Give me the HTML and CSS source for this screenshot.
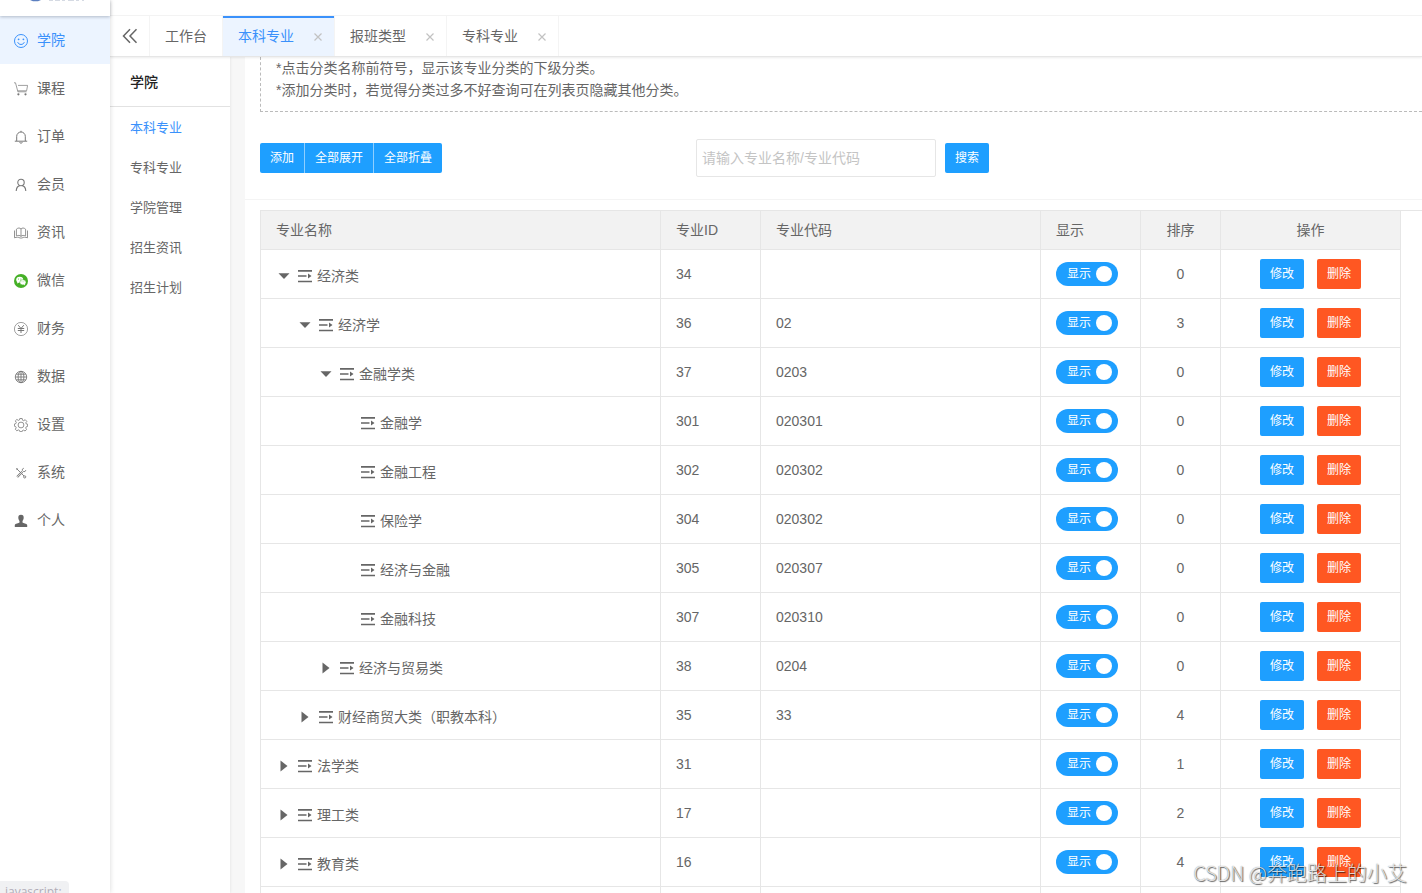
FILE: index.html
```html
<!DOCTYPE html>
<html lang="zh-CN">
<head>
<meta charset="utf-8">
<title>本科专业</title>
<link rel="stylesheet" href="styles.css">
</head>
<body>
<svg class="defs" aria-hidden="true">
  <symbol id="list" viewBox="0 0 14 14"><path d="M0 1.8h14M0 7h8.500M0 12.500h14" fill="none" stroke="currentColor" stroke-width="1.700"/><path d="M10 4.600v4.800l3.500-2.400z" fill="currentColor"/></symbol>
  <symbol id="down" viewBox="0 0 12 12"><path d="M.5 3.200h11L6 9z" fill="currentColor"/></symbol>
  <symbol id="right" viewBox="0 0 12 12"><path d="M2.500.5v11L9.500 6z" fill="currentColor"/></symbol>
  <symbol id="cross" viewBox="0 0 8 8"><path d="M.5.5l7 7M7.500.5l-7 7" fill="none" stroke="currentColor" stroke-width="1.200"/></symbol>
</svg>
<div class="app">
  <aside class="sidebar">
    <div class="logo"><svg width="60" height="4" viewBox="0 0 60 4" aria-hidden="true"><path d="M0 0h11L8 1.200H3z" fill="#5b7fc0"/><path d="M19 .5h4m2 0h5m2 0h3m3 0h6m2 0h3m3 0h2" stroke="#d5dae3"/></svg></div>
    <nav class="menu">
      <a class="menu-item active" href="#"><svg class="icon" viewBox="0 0 14 14"><g fill="none" stroke="currentColor"><circle cx="7" cy="7" r="6.500"/><path d="M3.700 8.200c1 3 5.600 3 6.600 0"/></g><circle cx="4.600" cy="5.300" r=".9" fill="currentColor"/><circle cx="9.400" cy="5.300" r=".9" fill="currentColor"/></svg>学院</a>
      <a class="menu-item" href="#"><svg class="icon" viewBox="0 0 14 14"><path d="M0 .8h1.500l2.400 9h8.600M4 3.400h9.600l-1 5.400H3.800" fill="none" stroke="currentColor" stroke-width=".7"/><circle cx="4.400" cy="12.300" r="1.100" fill="currentColor"/><circle cx="11.500" cy="12.300" r="1.100" fill="currentColor"/></svg>课程</a>
      <a class="menu-item" href="#"><svg class="icon" viewBox="0 0 14 14"><path d="M.8 11.200h12.400M2.700 11V6.300a4.300 4.300 0 0 1 8.600 0V11M5.700 12.200c.3 1.400 2.300 1.400 2.600 0M7 2V.8" fill="none" stroke="currentColor"/></svg>订单</a>
      <a class="menu-item" href="#"><svg class="icon" viewBox="0 0 14 14"><circle cx="7" cy="4.500" r="3.200" fill="none" stroke="currentColor" stroke-width="1.100"/><path d="M2.200 13c.2-3 1.600-5 3.600-5.400M11.800 13c-.2-3-1.600-5-3.600-5.400" fill="none" stroke="currentColor" stroke-width="1.100"/></svg>会员</a>
      <a class="menu-item" href="#"><svg class="icon" viewBox="0 0 14 14"><path d="M2.400 9.800V3.200C4 1.600 6 1.700 7 3c1-1.300 3-1.400 4.600.2v6.600C10 9.200 8 9.200 7 10.400 6 9.200 4 9.200 2.400 9.800zM7 3v7.400M.5 4.500v7.300c2-.8 4-.8 5.500.2h2c1.500-1 3.500-1 5.500-.2V4.500" fill="none" stroke="currentColor" stroke-width=".8"/></svg>资讯</a>
      <a class="menu-item" href="#"><svg class="icon" viewBox="0 0 14 14"><circle cx="7" cy="7" r="7" fill="#45b026"/><ellipse cx="5.700" cy="5.700" rx="3.500" ry="2.900" fill="#fff"/><path d="M3.500 7.500L3 9.600l2.200-1.200z" fill="#fff"/><ellipse cx="8.900" cy="8.300" rx="3.100" ry="2.600" fill="#fff" stroke="#45b026" stroke-width=".5"/><path d="M9.500 10.500l1.700.9-.4-1.500z" fill="#fff"/><g fill="#45b026"><circle cx="4.500" cy="5" r=".5"/><circle cx="6.900" cy="5" r=".5"/><circle cx="8" cy="7.800" r=".4"/><circle cx="9.900" cy="7.800" r=".4"/></g></svg>微信</a>
      <a class="menu-item" href="#"><svg class="icon" viewBox="0 0 14 14"><circle cx="7" cy="7" r="6.600" fill="none" stroke="currentColor" stroke-width=".7"/><path d="M4.200 3.200L7 6.500l2.800-3.300M3.800 6.500h6.400M3.800 8.500h6.400M7 6.500V11" fill="none" stroke="currentColor"/></svg>财务</a>
      <a class="menu-item" href="#"><svg class="icon" viewBox="0 0 14 14"><g fill="none" stroke="currentColor" stroke-width=".9"><circle cx="7" cy="7" r="5.700"/><ellipse cx="7" cy="7" rx="2.900" ry="5.700"/><path d="M7 1.300v11.400M1.300 7h11.400M2.200 4.200h9.600M2.200 9.800h9.600"/></g></svg>数据</a>
      <a class="menu-item" href="#"><svg class="icon" viewBox="0 0 14 14"><g fill="none" stroke="currentColor" stroke-width=".8"><circle cx="7" cy="7" r="2.900"/><path d="M5.800.5h2.400l.3 1.700 1.200.5 1.500-1 1.600 1.700-1 1.400.5 1.200 1.300.2v2.200l-1.400.4-.5 1.200.9 1.500-1.600 1.500-1.400-.9-1.200.5-.3 1.100H5.900l-.4-1.300-1.200-.5-1.500.9-1.500-1.600.9-1.400-.5-1.200L.4 8.200V6l1.400-.4.5-1.200-1-1.500 1.600-1.500 1.400 1 1.200-.5z"/></g></svg>设置</a>
      <a class="menu-item" href="#"><svg class="icon" viewBox="0 0 14 14"><g fill="none" stroke="currentColor" stroke-width=".9"><path d="M3 3l7 7"/><path d="M8.300 5.800L3.200 11" stroke-width="2.200"/><path d="M8.300 5.800L3.200 11" stroke="#fff" stroke-width=".8"/><path d="M9.800 2.200a2 2 0 0 0-1.400 2.600M11.900 4.100a2 2 0 0 1-2.700 1.400"/><circle cx="10.700" cy="10.900" r="1.100"/></g><path d="M2 2l2.200.8-1.400 1.400z" fill="currentColor"/></svg>系统</a>
      <a class="menu-item" href="#"><svg class="icon" viewBox="0 0 14 14"><path d="M7 .8c2 0 2.800 1.200 2.700 3-.1 1.700-.8 2.600-1.200 3.300v1.300c.7.700 4.300 1 4.700 2.600v2H.8v-2c.4-1.600 4-1.900 4.700-2.600V7.100C5.100 6.400 4.400 5.500 4.300 3.800 4.200 2 5 .8 7 .8z" fill="#666"/></svg>个人</a>
    </nav>
  </aside>
  <div class="workspace">
    <header class="topbar"></header>
    <div class="tabs">
      <button class="collapse" type="button" aria-label="收起"><svg width="16" height="16" viewBox="0 0 16 16"><path d="M8 1.200L1.500 8 8 14.800M14.500 1.200L8 8l6.500 6.800" fill="none" stroke="currentColor" stroke-width="1.500"/></svg></button>
      <div class="tab"><a href="#">工作台</a></div>
      <div class="tab closable active"><a href="#">本科专业</a><button type="button" aria-label="关闭"><svg><use href="#cross"/></svg></button></div>
      <div class="tab closable"><a href="#">报班类型</a><button type="button" aria-label="关闭"><svg><use href="#cross"/></svg></button></div>
      <div class="tab closable"><a href="#">专科专业</a><button type="button" aria-label="关闭"><svg><use href="#cross"/></svg></button></div>
    </div>
    <div class="body">
      <nav class="subnav">
        <h2>学院</h2>
        <div class="sublinks">
          <a class="active" href="#">本科专业</a>
          <a href="#">专科专业</a>
          <a href="#">学院管理</a>
          <a href="#">招生资讯</a>
          <a href="#">招生计划</a>
        </div>
      </nav>
      <main class="content">
        <div class="tips"><p>*点击分类名称前符号，显示该专业分类的下级分类。</p><p>*添加分类时，若觉得分类过多不好查询可在列表页隐藏其他分类。</p></div>
        <div class="toolbar">
          <div class="group"><button class="btn" type="button">添加</button><button class="btn" type="button">全部展开</button><button class="btn" type="button">全部折叠</button></div>
          <form class="search"><input type="text" aria-label="专业名称/专业代码" placeholder="请输入专业名称/专业代码"><button class="btn" type="button">搜索</button></form>
        </div>
        <div class="table-wrap">
          <table class="grid">
            <colgroup><col class="c-name"><col class="c-id"><col class="c-code"><col class="c-show"><col class="c-sort"><col class="c-ops"></colgroup>
            <thead><tr><th>专业名称</th><th>专业ID</th><th>专业代码</th><th>显示</th><th class="mid">排序</th><th class="mid">操作</th></tr></thead>
            <tbody>
              <tr><td><div class="node"><button type="button" aria-label="折叠"><svg><use href="#down"/></svg></button><svg class="list"><use href="#list"/></svg>经济类</div></td><td>34</td><td></td><td><label class="switch">显示<input type="checkbox" checked></label></td><td class="mid">0</td><td><div class="ops"><button class="btn" type="button">修改</button><button class="btn danger" type="button">删除</button></div></td></tr>
              <tr><td><div class="node l1"><button type="button" aria-label="折叠"><svg><use href="#down"/></svg></button><svg class="list"><use href="#list"/></svg>经济学</div></td><td>36</td><td>02</td><td><label class="switch">显示<input type="checkbox" checked></label></td><td class="mid">3</td><td><div class="ops"><button class="btn" type="button">修改</button><button class="btn danger" type="button">删除</button></div></td></tr>
              <tr><td><div class="node l2"><button type="button" aria-label="折叠"><svg><use href="#down"/></svg></button><svg class="list"><use href="#list"/></svg>金融学类</div></td><td>37</td><td>0203</td><td><label class="switch">显示<input type="checkbox" checked></label></td><td class="mid">0</td><td><div class="ops"><button class="btn" type="button">修改</button><button class="btn danger" type="button">删除</button></div></td></tr>
              <tr><td><div class="node leaf"><svg class="list"><use href="#list"/></svg>金融学</div></td><td>301</td><td>020301</td><td><label class="switch">显示<input type="checkbox" checked></label></td><td class="mid">0</td><td><div class="ops"><button class="btn" type="button">修改</button><button class="btn danger" type="button">删除</button></div></td></tr>
              <tr><td><div class="node leaf"><svg class="list"><use href="#list"/></svg>金融工程</div></td><td>302</td><td>020302</td><td><label class="switch">显示<input type="checkbox" checked></label></td><td class="mid">0</td><td><div class="ops"><button class="btn" type="button">修改</button><button class="btn danger" type="button">删除</button></div></td></tr>
              <tr><td><div class="node leaf"><svg class="list"><use href="#list"/></svg>保险学</div></td><td>304</td><td>020302</td><td><label class="switch">显示<input type="checkbox" checked></label></td><td class="mid">0</td><td><div class="ops"><button class="btn" type="button">修改</button><button class="btn danger" type="button">删除</button></div></td></tr>
              <tr><td><div class="node leaf"><svg class="list"><use href="#list"/></svg>经济与金融</div></td><td>305</td><td>020307</td><td><label class="switch">显示<input type="checkbox" checked></label></td><td class="mid">0</td><td><div class="ops"><button class="btn" type="button">修改</button><button class="btn danger" type="button">删除</button></div></td></tr>
              <tr><td><div class="node leaf"><svg class="list"><use href="#list"/></svg>金融科技</div></td><td>307</td><td>020310</td><td><label class="switch">显示<input type="checkbox" checked></label></td><td class="mid">0</td><td><div class="ops"><button class="btn" type="button">修改</button><button class="btn danger" type="button">删除</button></div></td></tr>
              <tr><td><div class="node l2"><button type="button" aria-label="展开"><svg><use href="#right"/></svg></button><svg class="list"><use href="#list"/></svg>经济与贸易类</div></td><td>38</td><td>0204</td><td><label class="switch">显示<input type="checkbox" checked></label></td><td class="mid">0</td><td><div class="ops"><button class="btn" type="button">修改</button><button class="btn danger" type="button">删除</button></div></td></tr>
              <tr><td><div class="node l1"><button type="button" aria-label="展开"><svg><use href="#right"/></svg></button><svg class="list"><use href="#list"/></svg>财经商贸大类（职教本科）</div></td><td>35</td><td>33</td><td><label class="switch">显示<input type="checkbox" checked></label></td><td class="mid">4</td><td><div class="ops"><button class="btn" type="button">修改</button><button class="btn danger" type="button">删除</button></div></td></tr>
              <tr><td><div class="node"><button type="button" aria-label="展开"><svg><use href="#right"/></svg></button><svg class="list"><use href="#list"/></svg>法学类</div></td><td>31</td><td></td><td><label class="switch">显示<input type="checkbox" checked></label></td><td class="mid">1</td><td><div class="ops"><button class="btn" type="button">修改</button><button class="btn danger" type="button">删除</button></div></td></tr>
              <tr><td><div class="node"><button type="button" aria-label="展开"><svg><use href="#right"/></svg></button><svg class="list"><use href="#list"/></svg>理工类</div></td><td>17</td><td></td><td><label class="switch">显示<input type="checkbox" checked></label></td><td class="mid">2</td><td><div class="ops"><button class="btn" type="button">修改</button><button class="btn danger" type="button">删除</button></div></td></tr>
              <tr><td><div class="node"><button type="button" aria-label="展开"><svg><use href="#right"/></svg></button><svg class="list"><use href="#list"/></svg>教育类</div></td><td>16</td><td></td><td><label class="switch">显示<input type="checkbox" checked></label></td><td class="mid">4</td><td><div class="ops"><button class="btn" type="button">修改</button><button class="btn danger" type="button">删除</button></div></td></tr>
              <tr><td></td><td></td><td></td><td></td><td></td><td></td></tr>
            </tbody>
          </table>
        </div>
      </main>
    </div>
  </div>
  <div class="status">javascript:</div>
  <div class="watermark">CSDN @奔跑路上的小艾</div>
</div>
</body>
</html>
```
FILE: styles.css
```css
* { box-sizing: border-box; }
body {
  margin: 0;
  font: 14px/22px "Liberation Sans", "Noto Sans CJK SC", sans-serif;
  color: #666;
  background: #fff;
}
a { color: inherit; text-decoration: none; }
button, input { font-family: inherit; }
button { padding: 0; border: 0; background: none; color: inherit; cursor: pointer; }
h2, p { margin: 0; }
.defs { display: none; }

.app { position: relative; display: flex; height: 100vh; overflow: hidden; }

.sidebar {
  position: relative;
  z-index: 2;
  flex: 0 0 110px;
  background: #fff;
  box-shadow: 0 0 5px rgba(0, 0, 0, .16);
}
.logo { position: relative; height: 16px; padding-left: 30px; box-shadow: 0 1px 3px rgba(0, 21, 41, .25); }
.logo svg { display: block; }
.menu-item {
  display: flex;
  align-items: center;
  gap: 9px;
  height: 48px;
  padding-left: 14px;
}
.menu-item.active { background: #ecf4ff; color: #3a91fb; }
.icon { width: 14px; height: 14px; margin-top: 2px; color: #777; }
.active .icon { color: #3a91fb; }

.workspace { flex: 1; min-width: 0; display: flex; flex-direction: column; }
.topbar { flex: 0 0 16px; border-bottom: 1px solid #f4f4f4; }
.tabs {
  position: relative;
  z-index: 1;
  display: flex;
  flex: 0 0 41px;
  border-bottom: 1px solid #e6e6e6;
  background: #fff;
  box-shadow: 0 1px 2px rgba(0, 0, 0, .08);
}
.collapse { display: grid; place-items: center; width: 40px; border-right: 1px solid #f4f4f4; }
.tab { display: flex; align-items: center; gap: 20px; padding: 0 15px; border-right: 1px solid #f4f4f4; }
.tab.closable { padding-right: 12px; }
.tab.active { background: #ecf4ff; color: #3a91fb; box-shadow: inset 0 2px #3a91fb; }
.tab button { color: #c2c2c2; }
.tab button svg { display: block; width: 8px; height: 8px; margin-top: 2px; }

.body { flex: 1; min-height: 0; display: flex; background: #f7f7f7; }
.subnav { flex: 0 0 120px; background: #fff; box-shadow: 0 0 3px rgba(0, 0, 0, .1); }
.subnav h2 { padding: 2px 0 0 20px; border-bottom: 1px solid #e2e2e2; font-size: 14px; font-weight: 500; line-height: 47px; color: #222; }
.sublinks { display: grid; padding-top: 1px; font-size: 13px; line-height: 40px; }
.sublinks a { padding-left: 20px; }
.sublinks .active { color: #3a91fb; }

.content { flex: 1; min-width: 0; margin-left: 15px; background: #fff; overflow: hidden; }
.tips { margin-left: 15px; padding: 0 15px 10px; border: dashed #bbb; border-width: 0 0 1px 1px; }
.toolbar {
  display: grid;
  grid-template-columns: 436px auto;
  align-items: center;
  padding: 27px 15px 22px;
  border-bottom: 1px solid #f4f4f4;
}
.group, .search { display: flex; align-items: center; }
.search { gap: 9px; }
.search input {
  width: 240px;
  height: 38px;
  padding: 0 5px;
  border: 1px solid #e6e6e6;
  border-radius: 2px;
  font-size: 14px;
}
.search input::placeholder { color: #c4c4c4; }
.btn {
  height: 30px;
  padding: 0 10px;
  border-radius: 2px;
  background: #1e9fff;
  color: #fff;
  font-size: 12px;
  line-height: 30px;
  white-space: nowrap;
}
.btn.danger { background: #ff5722; }
.group .btn { border-radius: 0; }
.group .btn + .btn { border-left: 1px solid #8fcfff; }
.group .btn:first-child { border-radius: 2px 0 0 2px; }
.group .btn:last-child { border-radius: 0 2px 2px 0; }

.table-wrap { margin: 10px 0 0 15px; border-top: 1px solid #e6e6e6; }
.grid { table-layout: fixed; width: 1141px; border-collapse: separate; border-spacing: 0; border-left: 1px solid #e6e6e6; }
.c-name { width: 400px; }
.c-id, .c-show { width: 100px; }
.c-code { width: 280px; }
.c-sort { width: 80px; }
.c-ops { width: 180px; }
.grid th, .grid td { padding: 0 15px; border: solid #e6e6e6; border-width: 0 1px 1px 0; text-align: left; font-weight: 400; }
.grid th { height: 39px; background: #f2f2f2; }
.grid td { height: 49px; }
.grid .mid { text-align: center; }
.node { display: flex; align-items: center; padding-top: 4px; }
.node.l1 { padding-left: 21px; }
.node.l2 { padding-left: 42px; }
.node.leaf { padding-left: 85px; }
.node button { width: 16px; margin-right: 6px; }
.node button svg { display: block; width: 12px; height: 12px; margin: 0 auto; }
.list { width: 14px; height: 14px; margin-right: 5px; }
.switch {
  display: flex;
  align-items: center;
  justify-content: space-between;
  width: 62px;
  height: 24px;
  padding: 0 6px 0 11px;
  border-radius: 12px;
  background: #1e9fff;
  color: #fff;
  font-size: 12px;
}
.switch input { appearance: none; width: 16px; height: 16px; margin: 0; border-radius: 50%; background: #fff; }
.ops { display: flex; justify-content: center; gap: 13px; }

.status {
  position: absolute;
  z-index: 3;
  left: 0;
  bottom: -8px;
  width: 69px;
  height: 20px;
  padding-left: 5px;
  border-radius: 0 4px 0 0;
  background: #f0f1f3;
  color: #b0adb8;
  font: 12px/22px "Open Sans", sans-serif;
}
.watermark {
  position: absolute;
  z-index: 3;
  right: 15px;
  bottom: 5px;
  color: rgba(255, 255, 255, .8);
  font: 300 20px/30px "Noto Sans CJK SC", sans-serif;
  text-shadow: 1px 1px 1px rgba(0, 0, 0, .6), 0 0 1px rgba(0, 0, 0, .5);
}
```
